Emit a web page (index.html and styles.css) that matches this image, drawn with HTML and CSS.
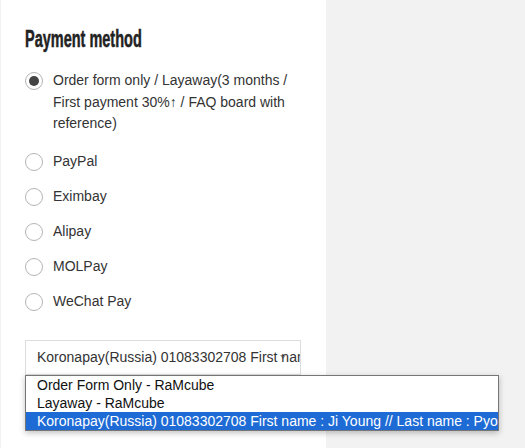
FILE: index.html
```html
<!DOCTYPE html>
<html lang="en">
<head>
  <meta charset="UTF-8">
  <meta name="viewport" content="width=device-width, initial-scale=1.0">
  <title>Payment method</title>
  <link rel="stylesheet" href="styles.css">
</head>
<body>
  <div class="page">
    <div class="panel">
      <h2 class="title"><span>Payment method</span></h2>

      <ul class="methods">
        <li class="method first">
          <span class="radio checked"></span>
          <span class="label">Order form only / Layaway(3 months / First payment 30%↑ / FAQ board with reference)</span>
        </li>
        <li class="method"><span class="radio"></span><span class="label">PayPal</span></li>
        <li class="method"><span class="radio"></span><span class="label">Eximbay</span></li>
        <li class="method"><span class="radio"></span><span class="label">Alipay</span></li>
        <li class="method"><span class="radio"></span><span class="label">MOLPay</span></li>
        <li class="method"><span class="radio"></span><span class="label">WeChat Pay</span></li>
      </ul>

      <div class="select-wrap">
        <div class="select">
          <span class="arrow"></span>
          <span class="value">Koronapay(Russia) 01083302708 First name : Ji Young // Last name : Pyo</span>
        </div>
        <div class="dropdown">
          <div class="option">Order Form Only - RaMcube</div>
          <div class="option">Layaway - RaMcube</div>
          <div class="option selected">Koronapay(Russia) 01083302708 First name : Ji Young // Last name : Pyo</div>
        </div>
      </div>
    </div>
  </div>
</body>
</html>
```

FILE: styles.css
```css
body {
  margin: 0;
  background-color: #f2f2f2;
  font-family: "Liberation Sans", Arial, sans-serif;
  color: #333;
}
.page {
  display: flex;
  min-height: 100vh;
  padding-left: 1px;
}
.panel {
  width: 325px;
  box-sizing: border-box;
  background-color: #fff;
  padding: 27px 24px 0 24px;
}
.title {
  font-family: "Liberation Sans", Arial, sans-serif;
  font-weight: bold;
  font-size: 23px;
  line-height: 24px;
  color: #222;
  margin: 0 0 19px 0;
}
.title span {
  display: inline-block;
  transform: scaleX(0.63);
  transform-origin: left center;
  white-space: nowrap;
  -webkit-text-stroke: 0.5px #222;
}
.methods {
  list-style: none;
  margin: 0;
  padding: 0;
}
.method {
  display: flex;
  align-items: flex-start;
  gap: 10px;
  font-size: 14px;
  line-height: 21.7px;
  margin-bottom: 13.45px;
}
.method.first {
  margin-bottom: 15.5px;
}
.radio {
  flex: none;
  width: 18px;
  height: 18px;
  box-sizing: border-box;
  border: 1px solid #b5b5b5;
  border-radius: 50%;
  margin-top: 2px;
  display: flex;
  align-items: center;
  justify-content: center;
}
.radio.checked::after {
  content: "";
  width: 10px;
  height: 10px;
  border-radius: 50%;
  background-color: #444;
}
.select-wrap {
  position: relative;
  margin-top: 27px;
}
.select {
  position: relative;
  width: 276px;
  height: 35px;
  box-sizing: border-box;
  border: 1px solid #ddd;
  padding: 0 2px 0 11px;
  font-size: 14px;
  line-height: 33px;
  white-space: nowrap;
  overflow: hidden;
}
.arrow {
  position: absolute;
  right: 14px;
  top: 14px;
  width: 0;
  height: 0;
  border-left: 3px solid transparent;
  border-right: 3px solid transparent;
  border-top: 4px solid #999;
}
.value {
  position: relative;
}
.dropdown {
  position: absolute;
  top: 35px;
  left: 0;
  width: 474px;
  box-sizing: border-box;
  border: 1px solid #767676;
  background-color: #fff;
  box-shadow: 0 2px 6px rgba(0, 0, 0, 0.25);
}
.option {
  height: 18px;
  line-height: 18px;
  padding-left: 11px;
  font-size: 14px;
  color: #111;
  white-space: nowrap;
  overflow: hidden;
}
.option.selected {
  background-color: #1e6bd6;
  color: #fff;
}
```
